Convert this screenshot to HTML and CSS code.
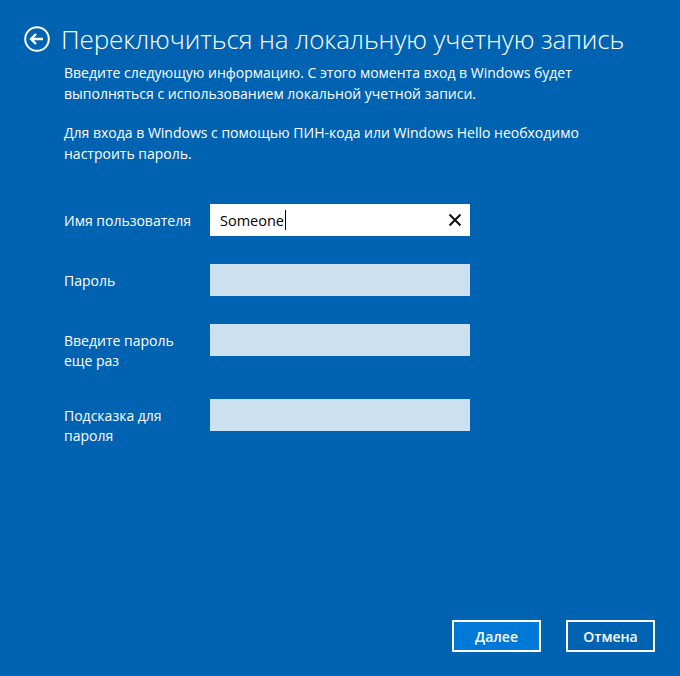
FILE: index.html
```html
<!DOCTYPE html>
<html lang="ru">
<head>
<meta charset="utf-8">
<title>Переключиться на локальную учетную запись</title>
<link rel="stylesheet" href="styles.css">
</head>
<body>
<div class="page">
  <header class="header">
    <button class="back" type="button" aria-label="Назад">
      <svg width="26" height="26" viewBox="0 0 26 26" aria-hidden="true">
        <circle cx="13" cy="13" r="11.8" fill="none" stroke="#fff" stroke-width="2"/>
        <path d="M7.2 13 H19 M12 8 L7 13 L12 18" fill="none" stroke="#fff" stroke-width="2.4" stroke-linejoin="miter"/>
      </svg>
    </button>
    <h1 class="title">Переключиться на локальную учетную запись</h1>
  </header>

  <main class="content">
    <p class="intro">Введите следующую информацию. С этого момента вход в Windows будет<br>выполняться с использованием локальной учетной записи.</p>
    <p class="intro">Для входа в Windows с помощью ПИН-кода или Windows Hello необходимо<br>настроить пароль.</p>

    <form class="form">
      <label class="label" for="user">Имя пользователя</label>
      <div class="field field-active">
        <span class="value" id="user">Someone</span><span class="caret"></span>
        <svg class="clear" width="14" height="14" viewBox="0 0 14 14" aria-hidden="true">
          <path d="M1.5 1.5 L12.5 12.5 M12.5 1.5 L1.5 12.5" stroke="#111" stroke-width="2.1" fill="none"/>
        </svg>
      </div>

      <label class="label">Пароль</label>
      <div class="field"></div>

      <label class="label">Введите пароль<br>еще раз</label>
      <div class="field"></div>

      <label class="label">Подсказка для<br>пароля</label>
      <div class="field"></div>
    </form>
  </main>

  <footer class="actions">
    <button class="btn btn-primary" type="button">Далее</button>
    <button class="btn" type="button">Отмена</button>
  </footer>
</div>
</body>
</html>
```

FILE: styles.css
```css
html, body {
  margin: 0;
  padding: 0;
  background: #0063b1;
}

body {
  font-family: "Open Sans", "Noto Sans", sans-serif;
  color: #fff;
}

.page {
  box-sizing: border-box;
  width: 680px;
  height: 676px;
  padding: 25px 25px 24px 24px;
  display: flex;
  flex-direction: column;
}

.header {
  display: flex;
  align-items: center;
  gap: 11px;
  height: 28px;
}

.back {
  width: 26px;
  height: 26px;
  padding: 0;
  margin: 0;
  border: 0;
  background: none;
  display: flex;
}

.title {
  margin: 0;
  font-size: 26px;
  font-weight: 300;
  line-height: 28px;
  letter-spacing: -0.1px;
  white-space: nowrap;
}

.content {
  padding-left: 40px;
  flex: 1;
}

.intro {
  margin: 9px 0 0;
  font-size: 14px;
  line-height: 21px;
  white-space: nowrap;
}

.intro + .intro {
  margin-top: 18px;
}

.form {
  margin-top: 40px;
  display: grid;
  grid-template-columns: 146px 260px;
  row-gap: 28px;
  align-items: start;
}

.label {
  padding-top: 7px;
  font-size: 14px;
  line-height: 20px;
}

.field {
  height: 32px;
  background: #cce0ef;
  display: flex;
  align-items: center;
  position: relative;
}

.field-active {
  background: #fff;
  color: #000;
  padding-left: 10px;
  box-sizing: border-box;
}

.value {
  font-size: 14.5px;
}

.caret {
  width: 1px;
  height: 20px;
  background: #000;
  margin-left: 1px;
}

.clear {
  position: absolute;
  right: 8px;
  top: 9px;
}

.actions {
  display: flex;
  justify-content: flex-end;
  gap: 25px;
}

.btn {
  box-sizing: border-box;
  width: 89px;
  height: 32px;
  border: 2px solid #fff;
  background: #0063b1;
  color: #fff;
  font-family: "Open Sans", "Noto Sans", sans-serif;
  font-size: 14px;
  font-weight: 600;
  padding: 0;
}

.btn-primary {
  background: #0078d7;
}
```
